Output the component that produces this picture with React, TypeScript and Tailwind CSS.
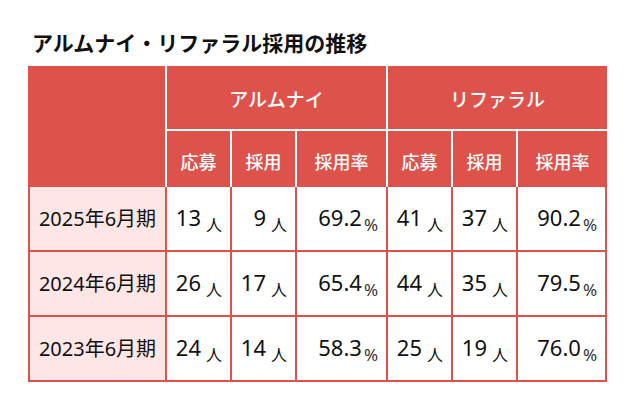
import React from 'react';

type Row = {
  label: string;
  alumni: [string, string, string];
  referral: [string, string, string];
};

const rows: Row[] = [
  { label: '2025年6月期', alumni: ['13', '9', '69.2'], referral: ['41', '37', '90.2'] },
  { label: '2024年6月期', alumni: ['26', '17', '65.4'], referral: ['44', '35', '79.5'] },
  { label: '2023年6月期', alumni: ['24', '14', '58.3'], referral: ['25', '19', '76.0'] },
];

const font = { fontFamily: '"Noto Sans", "Noto Sans CJK JP", sans-serif' };

function Count({ value }: { value: string }) {
  return (
    <td className="border-r-2 border-b-2 border-[#dd524b] pr-[8px] text-right align-middle whitespace-nowrap">
      <span className="text-[22px] leading-none text-[#111]">{value}</span>
      <span className="relative top-[5px] ml-[5px] text-[16px] leading-none text-[#111]">人</span>
    </td>
  );
}

function Rate({ value }: { value: string }) {
  return (
    <td className="border-r-2 border-b-2 border-[#dd524b] pr-[8px] text-right align-middle whitespace-nowrap">
      <span className="text-[22px] leading-none text-[#111]">{value}</span>
      <span className="relative top-[5px] ml-[2px] text-[17px] leading-none text-[#333]">%</span>
    </td>
  );
}

export default function App() {
  const sub = ['応募', '採用', '採用率', '応募', '採用', '採用率'];

  return (
    <div className="w-[637px] h-[408px] bg-white pl-[28px] pt-[27px]" style={font}>
      <h2
        className="pl-[4px] text-[21px] font-bold leading-[30px] text-[#111]"
        style={{ fontFamily: '"Noto Sans CJK JP", sans-serif' }}>
        アルムナイ・リファラル採用の推移
      </h2>

      <table className="mt-[9px] table-fixed border-separate border-spacing-0 w-[579px]">
        <colgroup>
          <col className="w-[139px]" />
          <col className="w-[65px]" />
          <col className="w-[65px]" />
          <col className="w-[91px]" />
          <col className="w-[65px]" />
          <col className="w-[65px]" />
          <col className="w-[89px]" />
        </colgroup>
        <thead>
          <tr className="h-[65px]">
            <th rowSpan={2} className="bg-[#dd524b] border-r-2 border-white" />
            <th
              colSpan={3}
              className="bg-[#dd524b] border-r-2 border-b-2 border-white pt-[6px] text-[19px] font-medium text-white">
              アルムナイ
            </th>
            <th colSpan={3} className="bg-[#dd524b] border-b-2 border-white pt-[6px] text-[19px] font-medium text-white">
              リファラル
            </th>
          </tr>
          <tr className="h-[56px]">
            {sub.map((s, i) => (
              <th
                key={i}
                className={`bg-[#dd524b] ${i < 5 ? 'border-r-2' : ''} border-white pt-[6px] text-[18px] font-medium text-white`}>
                {s}
              </th>
            ))}
          </tr>
        </thead>
        <tbody>
          {rows.map((r) => (
            <tr key={r.label} className="h-[65px]">
              <td className="bg-[#fde6e5] border-l-2 border-r-2 border-b-2 border-[#dd524b] text-center text-[20px] text-[#111]">
                {r.label}
              </td>
              <Count value={r.alumni[0]} />
              <Count value={r.alumni[1]} />
              <Rate value={r.alumni[2]} />
              <Count value={r.referral[0]} />
              <Count value={r.referral[1]} />
              <Rate value={r.referral[2]} />
            </tr>
          ))}
        </tbody>
      </table>
    </div>
  );
}
